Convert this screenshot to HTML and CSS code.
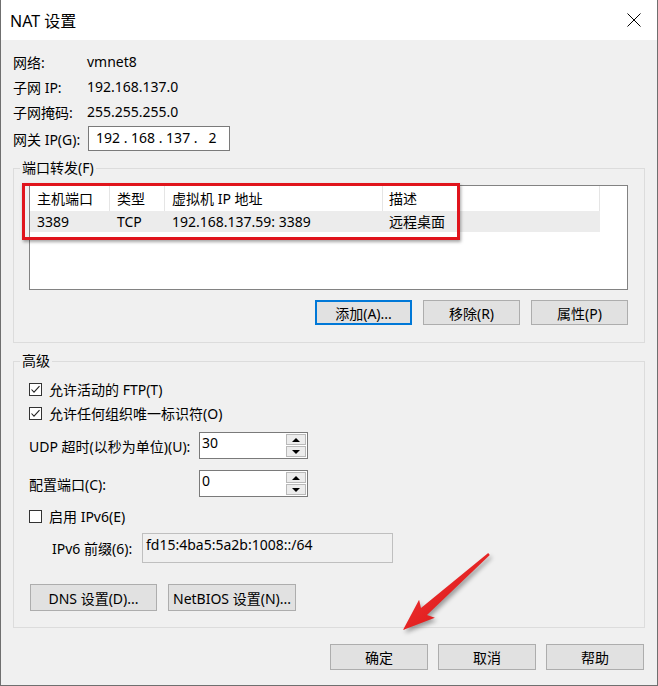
FILE: index.html
```html
<!DOCTYPE html>
<html lang="zh-CN">
<head>
<meta charset="utf-8">
<title>NAT 设置</title>
<link rel="stylesheet" href="styles.css">
</head>
<body>
<div class="window">
  <div class="titlebar">
    <span class="title">NAT 设置</span>
    <svg class="close" width="14" height="14" viewBox="0 0 14 14"><path d="M0.5 0.5 L13.5 13.5 M13.5 0.5 L0.5 13.5" stroke="#000" stroke-width="1" fill="none"/></svg>
  </div>
  <div class="content">
    <div class="irow"><span class="ilbl">网络:</span><span>vmnet8</span></div>
    <div class="irow"><span class="ilbl">子网 IP:</span><span>192.168.137.0</span></div>
    <div class="irow"><span class="ilbl">子网掩码:</span><span>255.255.255.0</span></div>
    <div class="irow gw"><span class="ilbl">网关 IP(G):</span><span class="ipbox">192 . 168 . 137 .   2</span></div>

    <fieldset class="group port">
      <legend>端口转发(F)</legend>
      <div class="inner">
        <div class="listbox">
          <div class="lrow head">
            <div class="c c1">主机端口</div>
            <div class="c c2">类型</div>
            <div class="c c3">虚拟机 IP 地址</div>
            <div class="c c4">描述</div>
          </div>
          <div class="lrow sel">
            <div class="c c1">3389</div>
            <div class="c c2">TCP</div>
            <div class="c c3">192.168.137.59: 3389</div>
            <div class="c c4">远程桌面</div>
          </div>
        </div>
        <div class="btnrow">
          <button class="btn default">添加(A)...</button>
          <button class="btn">移除(R)</button>
          <button class="btn">属性(P)</button>
        </div>
      </div>
    </fieldset>

    <fieldset class="group adv">
      <legend>高级</legend>
      <div class="inner">
        <div class="chk"><span class="box"><svg width="11" height="11" viewBox="0 0 11 11"><path d="M1.5 5.5 L4 8.2 L9.5 2.2" stroke="#222" stroke-width="1.1" fill="none"/></svg></span>允许活动的 FTP(T)</div>
        <div class="chk"><span class="box"><svg width="11" height="11" viewBox="0 0 11 11"><path d="M1.5 5.5 L4 8.2 L9.5 2.2" stroke="#222" stroke-width="1.1" fill="none"/></svg></span>允许任何组织唯一标识符(O)</div>
        <div class="spinrow">
          <span class="slbl">UDP 超时(以秒为单位)(U):</span>
          <div class="spin">
            <div class="sval">30</div>
            <div class="sbtns"><div class="sb"><span class="up"></span></div><div class="sb"><span class="down"></span></div></div>
          </div>
        </div>
        <div class="spinrow second">
          <span class="slbl">配置端口(C):</span>
          <div class="spin">
            <div class="sval">0</div>
            <div class="sbtns"><div class="sb"><span class="up"></span></div><div class="sb"><span class="down"></span></div></div>
          </div>
        </div>
        <div class="chk ipv6"><span class="box"></span>启用 IPv6(E)</div>
        <div class="prefixrow">
          <span class="plbl">IPv6 前缀(6):</span>
          <div class="pbox">fd15:4ba5:5a2b:1008::/64</div>
        </div>
        <div class="dnsrow">
          <button class="btn dns">DNS 设置(D)...</button>
          <button class="btn netbios">NetBIOS 设置(N)...</button>
        </div>
      </div>
    </fieldset>

    <div class="footer">
      <button class="btn fbtn">确定</button>
      <button class="btn fbtn">取消</button>
      <button class="btn fbtn">帮助</button>
    </div>
  </div>

  <div class="redbox"></div>
  <svg class="arrow" width="658" height="686" viewBox="0 0 658 686">
    <defs>
      <linearGradient id="ag" x1="0" y1="0" x2="1" y2="1">
        <stop offset="0" stop-color="#f2393a"/>
        <stop offset="1" stop-color="#d8100f"/>
      </linearGradient>
    </defs>
    <polygon points="488.2,553.1 421,608.1 419.1,599.8 403,630 434.9,617.8 427,614.9 489.8,554.9" fill="url(#ag)"/>
  </svg>
</div>
</body>
</html>
```

FILE: styles.css
```css
* { box-sizing: border-box; }

body {
  margin: 0;
  font-family: "Noto Sans", "Noto Sans CJK SC", sans-serif;
  font-size: 14px;
  color: #000;
  background: #fff;
}

.window {
  position: relative;
  width: 658px;
  height: 686px;
  border: 1px solid #6f6f6f;
  border-top: none;
  background: #f0f0f0;
  display: flex;
  flex-direction: column;
}

.titlebar {
  height: 40px;
  flex: none;
  background: #fff;
  display: flex;
  align-items: center;
  justify-content: space-between;
  padding: 0 16px 0 9px;
  font-size: 16px;
}

.close { display: block; }

.content {
  flex: 1;
  padding: 9px 12px 0 12px;
}

.irow {
  display: flex;
  align-items: center;
  height: 25px;
  white-space: nowrap;
}

.irow.gw { margin-top: 2px; }

.ilbl { width: 74px; flex: none; }

.ipbox {
  margin-left: 1px;
  width: 142px;
  height: 25px;
  border: 1px solid #7a7a7a;
  background: #fff;
  padding-left: 7px;
  white-space: pre;
  line-height: 22px;
}

.group {
  margin: 7px 0 0;
  padding: 0;
  border: 1px solid #dcdcdc;
  min-width: 0;
}

.group legend {
  margin-left: 6px;
  padding: 0 2px;
  line-height: 20px;
  height: 20px;
}

.port .inner { padding: 7px 16px 17px 15px; }

.listbox {
  height: 105px;
  border: 1px solid #828282;
  background: #fff;
}

.lrow { display: flex; }

.head { height: 25px; line-height: 25px; }

.head .c { border-right: 1px solid #e5e5e5; }

.sel {
  height: 21px;
  line-height: 21px;
  background: #ececec;
  width: 570px;
}

.c {
  flex: none;
  padding-left: 7px;
  white-space: nowrap;
}

.c1 { width: 80px; }
.c2 { width: 55px; }
.c3 { width: 218px; }
.c4 { width: 217px; padding-left: 6px; }

.btnrow {
  display: flex;
  justify-content: flex-end;
  gap: 11px;
  margin-top: 10px;
}

.btn {
  width: 97px;
  height: 25px;
  background: #e1e1e1;
  border: 1px solid #adadad;
  font: inherit;
  color: #000;
  padding: 0;
  text-align: center;
  white-space: nowrap;
}

.btn.default {
  border-color: #0078d7;
  box-shadow: inset 0 0 0 1px #0078d7;
}

.adv { margin-top: 8px; }

.adv .inner { padding: 6px 16px 16px 15px; }

.chk {
  display: flex;
  align-items: center;
  height: 24px;
  white-space: nowrap;
}

.box {
  width: 13px;
  height: 13px;
  border: 1px solid #333;
  background: #fff;
  margin-right: 7px;
  flex: none;
}

.box svg { display: block; }

.spinrow {
  display: flex;
  align-items: center;
  height: 27px;
  margin-top: 7px;
}

.spinrow.second { margin-top: 11px; }

.slbl { width: 170px; flex: none; white-space: nowrap; }

.spin {
  display: flex;
  width: 109px;
  height: 27px;
  border: 1px solid #7a7a7a;
  background: #fff;
}

.sval {
  flex: 1;
  padding: 0 0 0 2px;
  line-height: 19px;
}

.sbtns {
  width: 21px;
  display: flex;
  flex-direction: column;
  gap: 1px;
  padding: 1px 1px 1px 0;
}

.sb {
  flex: 1;
  background: #ececec;
  border: 1px solid #b9b9b9;
  display: flex;
  align-items: center;
  justify-content: center;
}

.up {
  width: 0;
  height: 0;
  border-left: 4px solid transparent;
  border-right: 4px solid transparent;
  border-bottom: 4px solid #000;
}

.down {
  width: 0;
  height: 0;
  border-left: 4px solid transparent;
  border-right: 4px solid transparent;
  border-top: 4px solid #000;
}

.chk.ipv6 { margin-top: 7px; }

.prefixrow {
  display: flex;
  align-items: center;
  height: 30px;
  margin-top: 5px;
  padding-left: 23px;
}

.plbl { width: 90px; flex: none; white-space: nowrap; }

.pbox {
  width: 251px;
  height: 30px;
  border: 1px solid #bfbfbf;
  background: #f0f0f0;
  padding: 1px 0 0 3px;
  line-height: 20px;
}

.dnsrow {
  display: flex;
  gap: 11px;
  margin-top: 21px;
  margin-left: 1px;
}

.btn.dns { width: 127px; height: 27px; }
.btn.netbios { width: 128px; height: 27px; }

.footer {
  display: flex;
  justify-content: flex-end;
  gap: 10px;
  margin-top: 16px;
  padding-right: 1px;
}

.btn.fbtn { width: 98px; height: 26px; }

.redbox {
  position: absolute;
  left: 21px;
  top: 183px;
  width: 438px;
  height: 57px;
  border: 3px solid #e0141c;
  box-shadow: 1px 2px 3px rgba(0, 0, 0, 0.35);
}

.arrow {
  position: absolute;
  left: -1px;
  top: 0;
  pointer-events: none;
  filter: drop-shadow(2px 3px 2px rgba(0, 0, 0, 0.35));
}
```
